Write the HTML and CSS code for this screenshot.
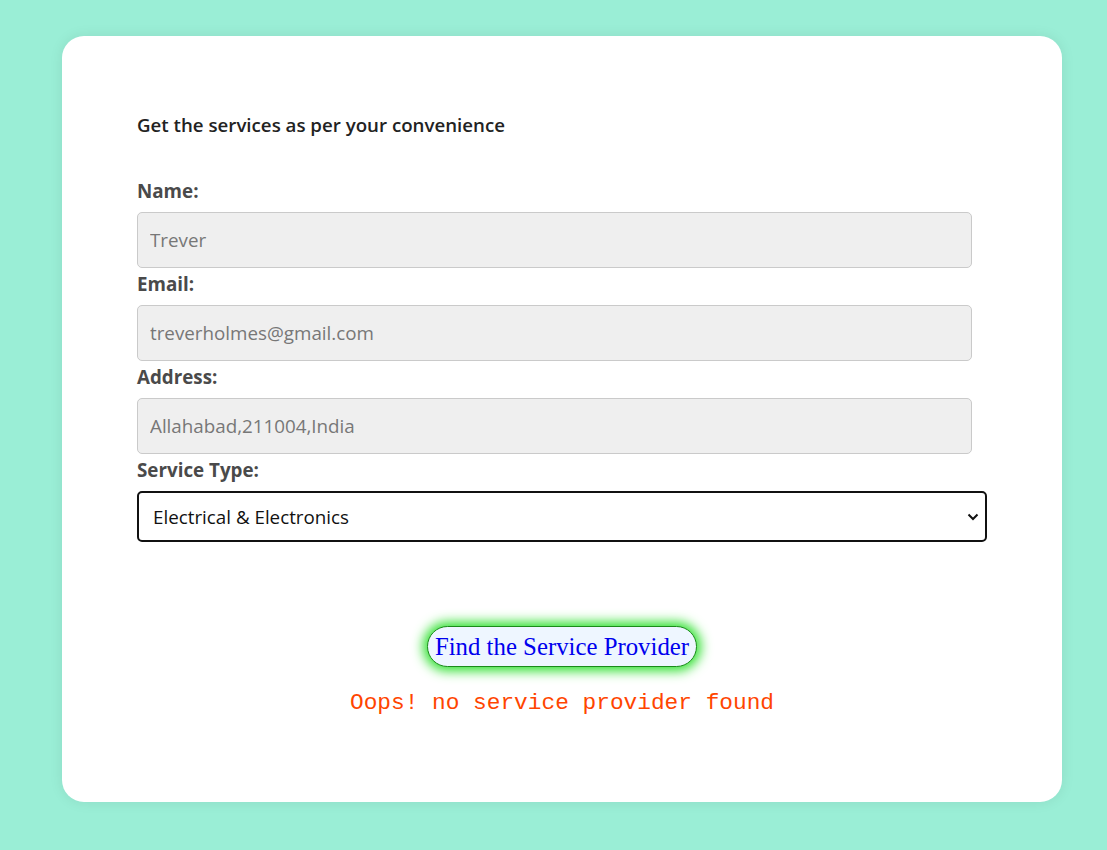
FILE: index.html
```html
<!DOCTYPE html>
<html>
<head>
<meta charset="utf-8">
<link rel="stylesheet" href="styles.css">
</head>
<body>
<div class="card">
  <h3 class="title">Get the services as per your convenience</h3>
  <form class="form">
    <label class="label">Name:</label>
    <input class="field" type="text" value="Trever" disabled>
    <label class="label">Email:</label>
    <input class="field" type="text" value="treverholmes@gmail.com" disabled>
    <label class="label">Address:</label>
    <input class="field" type="text" value="Allahabad,211004,India" disabled>
    <label class="label">Service Type:</label>
    <div class="select">
      <span>Electrical &amp; Electronics</span>
      <svg class="chev" width="12" height="8" viewBox="0 0 12 8"><path d="M1.5 1.5 L6 6 L10.5 1.5" fill="none" stroke="#111" stroke-width="2"/></svg>
    </div>
  </form>
  <div class="actions">
    <button class="btn" type="button">Find the Service Provider</button>
    <p class="msg">Oops! no service provider found</p>
  </div>
</div>
</body>
</html>
```
FILE: styles.css
```css
html, body {
  margin: 0;
  padding: 0;
}
body {
  background: #9aeed6;
  height: 850px;
  font-family: "Open Sans", "Noto Sans", sans-serif;
  padding-top: 36px;
  box-sizing: border-box;
}
.card {
  margin-left: 62px;
  width: 1000px;
  height: 766px;
  box-sizing: border-box;
  background: #fff;
  border-radius: 22px;
  box-shadow: 0 0 14px rgba(0, 0, 0, 0.08);
  padding: 77px 75px 0 75px;
}
.title {
  margin: 0;
  font-size: 18.7px;
  font-weight: 600;
  color: #222;
  line-height: 24px;
}
.form {
  display: flex;
  flex-direction: column;
  align-items: flex-start;
  margin-top: 42px;
}
.label {
  font-size: 18.8px;
  font-weight: 700;
  color: #4a4a4a;
  line-height: 24px;
  margin-bottom: 9px;
}
.field {
  width: 835px;
  height: 56px;
  box-sizing: border-box;
  background: #efefef;
  border: 1px solid #cacaca;
  border-radius: 5px;
  padding: 0 12px;
  font-family: "Open Sans", "Noto Sans", sans-serif;
  font-size: 18.8px;
  color: #777;
  margin: 0 0 4px 0;
}
.select {
  width: 850px;
  height: 51px;
  box-sizing: border-box;
  border: 2px solid #111;
  border-radius: 5px;
  display: flex;
  align-items: center;
  justify-content: space-between;
  padding: 0 6px 0 14px;
  font-size: 18.8px;
  color: #111;
}
.chev {
  display: block;
}
.actions {
  display: flex;
  flex-direction: column;
  align-items: center;
  margin-top: 84px;
}
.btn {
  font-family: "Liberation Serif", serif;
  font-size: 24.8px;
  color: #0000ee;
  background: #eef6ff;
  border: 1px solid #1a8a1a;
  border-radius: 22px;
  padding: 5px 7px;
  box-shadow: 0 0 12px 4px #2ee02e;
  line-height: 29px;
}
.msg {
  margin: 22px 0 0 0;
  font-family: "Liberation Mono", monospace;
  font-size: 22.8px;
  color: #ff4500;
  line-height: 28px;
}
```
